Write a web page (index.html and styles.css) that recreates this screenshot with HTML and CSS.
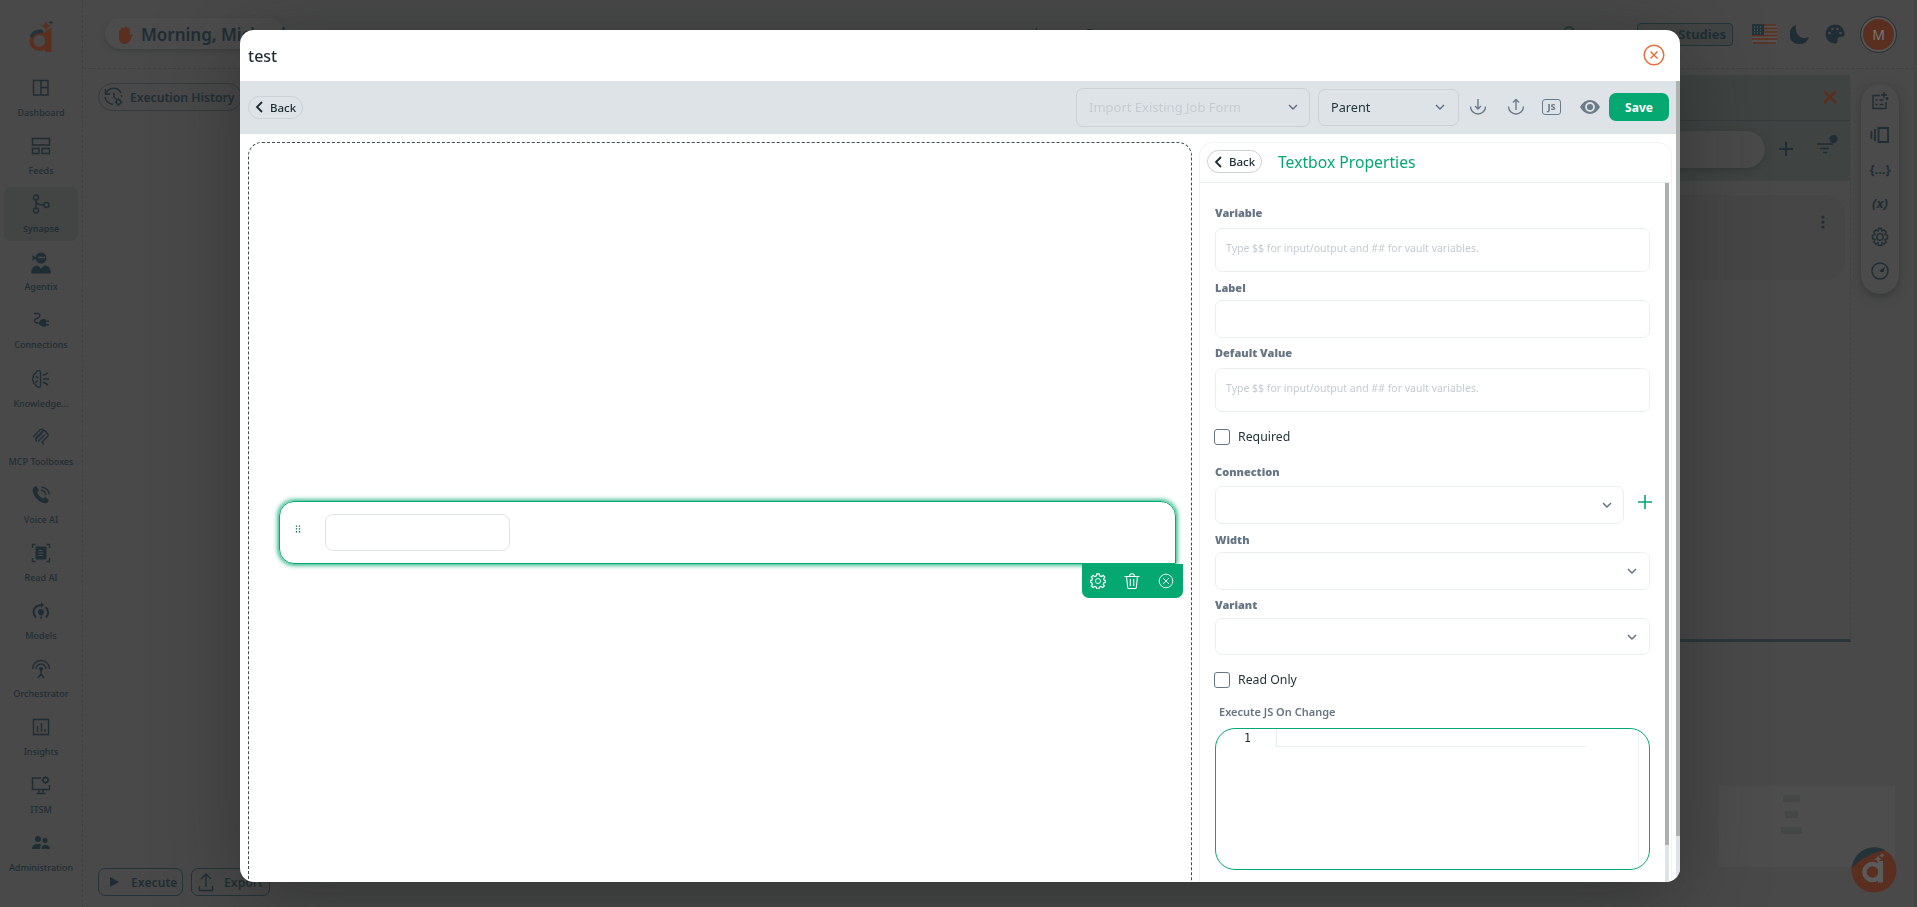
FILE: index.html
```html
<!DOCTYPE html>
<html lang="en">
<head>
    <meta charset="UTF-8">
    <meta name="viewport" content="width=device-width, initial-scale=1.0">
    <title>Form Builder</title>
    <link rel="stylesheet" href="styles.css">
</head>
<body>

    <div class="app">
        <nav class="sidebar">
            <svg class="logo" width="26" height="32" viewBox="0 0 26 32">
                <circle cx="11.500" cy="21" r="8" fill="none" stroke="#5a2f20" stroke-width="4"/>
                <path d="M17 11l6.500-3v24H17z" fill="#5a2f20"/>
                <path d="M3 17Q6 10 15 11.500" stroke="#22343a" stroke-width="3.500" fill="none"/>
                <path d="M18 1l1.500 3.500L23 6l-3.500 1.500L18 11l-1.500-3.500L13 6l3.500-1.500z" fill="#5a2f20"/>
                <path d="M23 0l.7 1.700 1.800.8-1.800.7L23 5l-.7-1.800-1.800-.7 1.800-.8z" fill="#22343a"/>
            </svg>

            <a class="nav-item">
                <svg width="20" height="20" viewBox="0 0 20 20"><path d="M2.500 2.500h14.500v14.500h-14.500zM10 2.500v14.500M10 9.500h7"/></svg>
                <span>Dashboard</span>
            </a>
            <a class="nav-item">
                <svg width="20" height="20" viewBox="0 0 20 20"><path d="M1.500 2.500h17v6.500h-17zM1.500 12.500h6.500v5h-6.500zM11 12.500h7.500v5h-7.500z"/></svg>
                <span>Feeds</span>
            </a>
            <a class="nav-item active">
                <svg width="20" height="20" viewBox="0 0 20 20"><circle cx="5" cy="3.500" r="2.500"/><circle cx="5" cy="16.500" r="2.500"/><circle cx="15.500" cy="11" r="2.500"/><path d="M5 6v8M5 7.500q1 3.500 8 3.500"/></svg>
                <span>Synapse</span>
            </a>
            <a class="nav-item">
                <svg class="solid" width="20" height="22" viewBox="0 0 20 22"><circle cx="10" cy="6" r="5.500"/><path d="M1.500 3l4 3-4 3zM0 21.500q.5-8 6.500-8l3.500 3 3.500-3q6 0 6.500 8z"/><path d="M7 5.500h7" stroke="#494949"/></svg>
                <span>Agentix</span>
            </a>
            <a class="nav-item">
                <svg width="20" height="20" viewBox="0 0 20 20"><path d="M3 3.500h4.500q3 2-.5 4.500-5 1.500-3 4 1 1 3.500 1"/><path class="fill" d="M8 12q2-4 7-2.500v1h3v1.500h-3v2h3v1.500h-3v1q-5 1-7-2.500z"/></svg>
                <span>Connections</span>
            </a>
            <a class="nav-item">
                <svg width="20" height="20" viewBox="0 0 20 20"><path d="M9.500 2.500v15M9.500 2q-4-1.500-5 2.500-3 1-2 3.500-2 2 0 4-.5 3 2 3.500 1.500 3.500 5 2.500M4.500 7.500q2 0 2.500 2M5 14q0-2 2-2M12 6q3 0 5-2.500M12 10h6M12 13.500q3 0 5 3"/></svg>
                <span>Knowledge...</span>
            </a>
            <a class="nav-item">
                <svg width="20" height="20" viewBox="0 0 20 20"><path d="M2 10l7-7q2-1.500 3.500.5 3 0 3 2.500 2.500 1 1 3.500l-5.500 5.500 2 2.500M4.500 12.500l7-7M7 14.500l7-7M12.500 3.500l-7.500 7.500q-1 2.500 1 3"/></svg>
                <span>MCP Toolboxes</span>
            </a>
            <a class="nav-item">
                <svg width="20" height="20" viewBox="0 0 20 20"><path class="fill" d="M2 3l3-2 3 4-2 2.500q2 4.500 6 6.500l2-2 4 3-2 3Q10 19 5 13 1 8 2 3z"/><path d="M10 5q4 1 5 5M10.500 2q6.500 1 8 7.500"/></svg>
                <span>Voice AI</span>
            </a>
            <a class="nav-item">
                <svg width="20" height="20" viewBox="0 0 20 20"><rect class="fill" x="4.500" y="3.500" width="11" height="13" rx="1"/><path d="M1.500 5v-3.500h3M15.500 1.500h3v3.500M1.500 15v3.500h3M15.500 18.500h3v-3.500"/><path class="cut" d="M7.500 7.500h4M7.500 10h5M7.500 12.500h4"/></svg>
                <span>Read AI</span>
            </a>
            <a class="nav-item">
                <svg width="20" height="20" viewBox="0 0 20 20"><path stroke-width="2" d="M5 16.500Q1 12 3.500 7.500 6 4 11 4M14.500 6q5 5 .5 10.500"/><path class="fill" d="M10 1l3 3-3 3z"/><path class="fill" d="M7 11a3 3 0 0 1 6 0q0 2-2 3.500h-2q-2-1.500-2-3.500zM9.300 15.500h1.500v2.500h-1.500z"/></svg>
                <span>Models</span>
            </a>
            <a class="nav-item">
                <svg width="20" height="20" viewBox="0 0 20 20"><path d="M1.500 10a8.500 8.500 0 0 1 17 0M5 10a5 5 0 0 1 10 0M10 11v4l-3 4M10 15l3 4"/><circle class="fill" cx="10" cy="10" r="2"/></svg>
                <span>Orchestrator</span>
            </a>
            <a class="nav-item">
                <svg width="20" height="20" viewBox="0 0 20 20"><path d="M2.500 2.500h15v15h-15zM6.500 9v6M10.500 6v9M14 12v3"/></svg>
                <span>Insights</span>
            </a>
            <a class="nav-item">
                <svg width="20" height="20" viewBox="0 0 20 20"><path d="M10 3H1.500v11.500h17V10M8 14.500v3M12 14.500v3M5.500 18.500h9"/><circle cx="14.500" cy="5" r="2.500"/><path d="M14.500 1v1.500M14.500 7.500V9M10.500 5H12M17 5h1.500M12 2.500l1 1M17 2.500l-1 1M12 7.500l1-1M17 7.500l-1-1"/></svg>
                <span>ITSM</span>
            </a>
            <a class="nav-item">
                <svg class="solid" width="20" height="20" viewBox="0 0 20 20"><circle cx="7" cy="6" r="3"/><circle cx="14" cy="7.500" r="2.500"/><path d="M1 16q0-5 6-5 2 0 3 .5-1 1.500-1 4.500zM10.500 16q0-4 4-4t4.500 4z"/></svg>
                <span>Administration</span>
            </a>
        </nav>

        <div class="main">
            <header class="topbar">
                <div class="greeting">
                    <svg class="hand" width="15" height="18" viewBox="0 0 15 18"><path d="M3 3q1-2 2.500-1 2-2 4-.2Q12 1.500 12 4v5l3-1-3 7q-2 3-5.500 3Q1 17.500 1 12V6q.5-2 2-3z"/></svg>
                    <span>Morning, Michael</span>
                </div>
                <svg class="top-marks" width="60" height="8" viewBox="0 0 60 8"><path d="M0 8l4-6v6zM54 4h5v4h-5z"/></svg>
                <div class="topbar-right">
                    <svg class="search-icon" width="20" height="20" viewBox="0 0 20 20"><circle cx="8" cy="8" r="5"/><path d="M12 12l5 5"/></svg>
                    <span class="studies">Case Studies</span>
                    <svg class="flag" width="25" height="20" viewBox="0 0 25 20">
                        <rect width="25" height="20" rx="2" fill="#56504e"/>
                        <path d="M1 1h23M0 4.500h25M0 8h25M0 11.500h25M0 15h25M1 19h23" stroke="#5a2f20" stroke-width="1.600"/>
                        <rect width="12" height="11" fill="#22343a"/>
                        <path d="M2 3h9M2 6h9M2 9h9" stroke="#4b5557" stroke-dasharray="1 2"/>
                    </svg>
                    <svg class="solid" width="20" height="20" viewBox="0 0 20 20"><path d="M6 1A10 10 0 1 0 19 13Q12 16 8 11 5 7 6 1z"/></svg>
                    <svg class="solid" width="20" height="20" viewBox="0 0 20 20"><path d="M10 .5a9.500 9.500 0 0 0 0 19q3 0 2.500-3-.5-3 2-3.500l3-.3Q20 12 19.500 9 18 .5 10 .5z"/><g fill="#494949"><circle cx="4.500" cy="9" r="1.300"/><circle cx="7.500" cy="5" r="1.300"/><circle cx="12.500" cy="5" r="1.300"/><circle cx="15.500" cy="9" r="1.300"/></g></svg>
                    <span class="avatar">M</span>
                </div>
            </header>

            <div class="workspace">
                <div class="workspace-left">
                    <button class="dark-btn round">
                        <svg width="20" height="20" viewBox="0 0 20 20"><path d="M2 7a8 8 0 0 1 15-1M17.500 8v2M1 10q1 6 8 7.500M1.500 2v5h5M10 5.500v5l3 2"/><circle cx="14.500" cy="15" r="2.200"/><path d="M14.500 11v1.500M14.500 17.500v1.500M11 15h1.500M16.500 15h2"/></svg>
                        Execution History
                    </button>
                    <div class="bottom-actions">
                        <button class="dark-btn execute-btn"><svg class="solid" width="20" height="20" viewBox="0 0 20 20"><path d="M6 5l9 5-9 5z"/></svg>Execute</button>
                        <button class="dark-btn export-btn"><svg width="16" height="20" viewBox="0 0 16 20"><path d="M8 15V2M3 7l5-5 5 5M1.500 14v4.500h13V14"/></svg>Export</button>
                    </div>
                </div>

                <section class="side-panel">
                    <div class="side-title">
                        <svg width="16" height="16" viewBox="0 0 16 16"><path d="M2 2l12 12M14 2L2 14"/></svg>
                    </div>
                    <div class="side-search">
                        <div class="search-pill"></div>
                        <svg width="16" height="16" viewBox="0 0 16 16"><path stroke-width="2" d="M8 1v14M1 8h14"/></svg>
                        <svg width="22" height="20" viewBox="0 0 22 20"><path d="M1 10h16M4 14.500h9M7 18.500h4"/><circle class="fill" cx="17.500" cy="5" r="4"/></svg>
                    </div>
                    <div class="side-card">
                        <svg class="solid" width="6" height="14" viewBox="0 0 6 14"><circle cx="3" cy="2" r="1.600"/><circle cx="3" cy="7" r="1.600"/><circle cx="3" cy="12" r="1.600"/></svg>
                    </div>
                </section>

                <div class="tool-pill">
                    <svg width="20" height="20" viewBox="0 0 20 20"><path d="M10 4.500H3v13h13V11M5.500 9h2M5.500 13.500h2M9.500 9h4M9.500 13.500h4M14 1v6M11 4h6M17 6v3M15.500 7.500h3"/></svg>
                    <svg width="20" height="20" viewBox="0 0 20 20"><path stroke-width="1.800" d="M8.500 3h9.500v14H8.500zM5 4v12M1.500 6v8"/></svg>
                    <span>{...}</span>
                    <span><i>(x)</i></span>
                    <svg width="20" height="20" viewBox="0 0 20 20"><circle cx="10" cy="10" r="3.200"/><path d="M8.500 1.500h3l.5 2.500 2-1.200 2.200 2.200L15 7.500l2.500.7v3.500l-2.500.7 1.200 2.500-2.200 2.200-2-1.200-.5 2.600h-3L8 15.900l-2 1.200L3.800 15 5 12.400l-2.500-.7V8.200L5 7.500 3.800 5 6 2.800 8 4z"/></svg>
                    <svg width="20" height="20" viewBox="0 0 20 20"><circle cx="10" cy="10" r="8"/><path class="fill" d="M15 6l-5.500 3.500 1 1.500h3z"/></svg>
                </div>

                <div class="minimap"><i class="n1"></i><i class="n2"></i><i class="n3"></i></div>
            </div>
        </div>
    </div>

    <div class="fab">
        <svg width="46" height="46" viewBox="0 0 46 46">
            <circle cx="23" cy="23" r="22.500" fill="#5a2f20"/>
            <path d="M1 21A22.500 22.500 0 0 1 34 3Q12 8 1 21z" fill="#22343a"/>
            <circle cx="21.500" cy="25" r="8" fill="none" stroke="#5a5a5a" stroke-width="4.500"/>
            <path d="M29.500 14v21.500" stroke="#5a5a5a" stroke-width="5"/>
            <path d="M27 8l1.200 3L31 12l-2.800 1.200L27 16l-1.200-2.800L23 12l2.800-1z" fill="#5a5a5a"/>
            <path d="M31 6.500v4M29 8.500h4" stroke="#5a5a5a"/>
        </svg>
    </div>

    <div class="overlay">
        <div class="modal">
            <div class="modal-header">
                <span>test</span>
                <svg width="22" height="22" viewBox="0 0 22 22"><circle cx="11" cy="11" r="9.800"/><path d="M7.500 7.500l7 7M14.500 7.500l-7 7"/></svg>
            </div>

            <div class="modal-scroll">
                <div class="modal-content">
                    <div class="toolbar">
                        <button class="back-btn"><svg width="8" height="12" viewBox="0 0 8 12"><path d="M7 1L2 6l5 5"/></svg>Back</button>
                        <div class="select import">Import Existing Job Form<svg width="10" height="6" viewBox="0 0 10 6"><path d="M1 1l4 4 4-4"/></svg></div>
                        <div class="select parent">Parent<svg width="10" height="6" viewBox="0 0 10 6"><path d="M1 1l4 4 4-4"/></svg></div>
                        <div class="tools">
                            <svg width="18" height="18" viewBox="0 0 18 18"><path d="M1.500 8.500a7.500 7.500 0 0 0 15 0M9 1v10M6 8l3 3 3-3"/></svg>
                            <svg width="18" height="18" viewBox="0 0 18 18"><path d="M1.500 8.500a7.500 7.500 0 0 0 15 0M9 12V1.500M6 4.500l3-3 3 3"/></svg>
                            <span class="js-icon">JS</span>
                            <svg class="eye" width="20" height="16" viewBox="0 0 20 16"><path d="M0 8q4-7 10-7t10 7q-4 7-10 7T0 8z"/><circle class="ring" cx="10" cy="8" r="4"/></svg>
                        </div>
                        <button class="save-btn">Save</button>
                    </div>

                    <div class="builder">
                        <div class="canvas">
                            <div class="field-card">
                                <svg width="6" height="8" viewBox="0 0 6 8"><path d="M1.500 .5v7M4.500 .5v7" stroke="#046b48" stroke-width="1.300" stroke-dasharray="1.300 1.500"/></svg>
                                <input class="field-input" type="text">
                                <div class="field-actions">
                                    <svg width="16" height="16" viewBox="0 0 20 20"><circle cx="10" cy="10" r="3.200"/><path stroke-width="1.500" d="M8.500 1h3l.5 2.500 2.200 1L16.500 3l2 2.200-1.500 2.200.8 1.600 2 .5v2l-2.200.5-1 2.200 1.400 2-2.200 2-2-1.300-2.200.9-.6 2.200h-2.400L8 17.800l-2.100-.9-2 1.300-2.200-2 1.400-2-1-2.200L0 11.500v-2L2.300 9l.8-2-1.400-2L3.800 3 6 4.400 8 3.500z"/></svg>
                                    <svg width="16" height="16" viewBox="0 0 16 16"><path d="M.5 3.500h15M2.500 3.500l1.200 11q.1 1 1 1h6.600q.9 0 1-1l1.200-11M5.500 3.500Q5.500 .7 8 .7t2.500 2.800M6.300 6v7M9.700 6v7"/></svg>
                                    <svg class="thin" width="16" height="16" viewBox="0 0 16 16"><circle cx="8" cy="8" r="6.800"/><path d="M5 5l6 6M11 5l-6 6"/></svg>
                                </div>
                            </div>
                        </div>

                        <div class="props">
                            <div class="props-header">
                                <button class="back-btn"><svg width="8" height="12" viewBox="0 0 8 12"><path d="M7 1L2 6l5 5"/></svg>Back</button>
                                <span class="props-title">Textbox Properties</span>
                            </div>
                            <div class="props-scroll">
                                <form class="props-body">
                                    <label class="lbl variable">Variable</label>
                                    <div class="box tall">Type $$ for input/output and ## for vault variables.</div>
                                    <label class="lbl label">Label</label>
                                    <div class="box"></div>
                                    <label class="lbl default">Default Value</label>
                                    <div class="box tall">Type $$ for input/output and ## for vault variables.</div>
                                    <label class="check"><span class="tick"></span>Required</label>
                                    <label class="lbl connection">Connection</label>
                                    <div class="conn-row">
                                        <div class="box drop"><svg width="10" height="6" viewBox="0 0 10 6"><path d="M1 1l4 4 4-4"/></svg></div>
                                        <svg class="plus" width="16" height="16" viewBox="0 0 16 16"><path d="M8 1v14M1 8h14"/></svg>
                                    </div>
                                    <label class="lbl width">Width</label>
                                    <div class="box drop"><svg width="10" height="6" viewBox="0 0 10 6"><path d="M1 1l4 4 4-4"/></svg></div>
                                    <label class="lbl variant">Variant</label>
                                    <div class="box drop short"><svg width="10" height="6" viewBox="0 0 10 6"><path d="M1 1l4 4 4-4"/></svg></div>
                                    <label class="check"><span class="tick"></span>Read Only</label>
                                    <label class="lbl execute">Execute JS On Change</label>
                                    <div class="editor">
                                        <span class="line-no">1</span>
                                        <div class="line"></div>
                                        <div class="ruler"></div>
                                    </div>
                                    <label class="lbl type">Type</label>
                                </form>
                                <div class="scrollbar"><div class="thumb"></div></div>
                            </div>
                        </div>
                    </div>
                </div>
                <div class="scrollbar outer"><div class="thumb"></div></div>
            </div>
        </div>
    </div>

</body>
</html>
```

FILE: styles.css
```css
* {
    box-sizing: border-box;
}
body {
    margin: 0;
    height: 100vh;
    overflow: hidden;
    background: #494949;
    color: #1f2e34;
    font-family: "Noto Sans", sans-serif;
}
svg {
    display: block;
    flex: none;
    fill: none;
    stroke: currentColor;
    stroke-width: 1.4;
}
svg.solid, svg .fill {
    fill: currentColor;
    stroke: none;
}
svg path.cut {
    stroke: #494949;
    stroke-width: 1;
}
button {
    font-family: inherit;
    cursor: pointer;
}

/* page behind the modal */
.app {
    display: flex;
    height: 100vh;
}
.sidebar {
    width: 83px;
    padding: 20px 4px 0;
    display: flex;
    flex-direction: column;
    align-items: center;
    gap: 4.1px;
    border-right: 1px dashed #414141;
}
.logo {
    margin: 0 0 15px;
    stroke: none;
}
.nav-item {
    width: 74px;
    height: 54px;
    padding: 7px 0 5px;
    border-radius: 7px;
    display: flex;
    flex: none;
    flex-direction: column;
    align-items: center;
    justify-content: space-between;
    font-size: 9px;
    font-weight: 500;
    line-height: 14px;
    white-space: nowrap;
}
.nav-item.active {
    background: #424544;
    font-weight: 600;
}
.main {
    flex: 1;
    display: flex;
    flex-direction: column;
    border-right: 3px solid #464646;
}
.topbar {
    height: 69px;
    display: flex;
    justify-content: space-between;
    padding: 18px 17px 0 22px;
    border-bottom: 1px dashed #414141;
}
.greeting {
    width: 180px;
    height: 31px;
    padding: 2px 0 0 13px;
    display: flex;
    align-items: center;
    gap: 8px;
    border-radius: 16px;
    background: #4c4c4c;
    box-shadow: 0 2px 4px #3c3f3e;
    font-size: 17px;
    font-weight: 600;
    white-space: nowrap;
}
.hand {
    fill: #5a2f20;
    stroke: none;
}
.top-marks {
    margin: 7px 0 0 280px;
    fill: currentColor;
    stroke: none;
}
.topbar-right {
    display: flex;
    align-items: center;
    height: 32px;
}
.search-icon {
    margin-right: 56px;
}
.studies {
    width: 96px;
    height: 23px;
    margin-right: 19px;
    padding-right: 6px;
    border: 1px solid #22343a;
    border-radius: 4px;
    background: #424544;
    font-size: 13px;
    font-weight: 700;
    line-height: 20px;
    text-align: right;
    white-space: nowrap;
}
.flag {
    margin-right: 13px;
    stroke: none;
}
.topbar-right .solid {
    margin-right: 15px;
}
.avatar {
    width: 37px;
    height: 37px;
    border: 1px solid #22343a;
    border-radius: 50%;
    background: #5a2f20;
    box-shadow: inset 0 0 0 2px #555;
    color: #777;
    font-size: 14px;
    line-height: 35px;
    text-align: center;
}
.workspace {
    flex: 1;
    display: flex;
    padding-left: 15px;
    position: relative;
}
.workspace-left {
    flex: 1;
    display: flex;
    flex-direction: column;
    align-items: flex-start;
    justify-content: space-between;
    padding: 14px 0 11px;
}
.bottom-actions {
    display: flex;
    gap: 8px;
}
.dark-btn {
    height: 28px;
    padding: 0 7px 0 5px;
    display: flex;
    align-items: center;
    gap: 7px;
    border: 1px solid #22343a;
    border-radius: 7px;
    background: none;
    color: inherit;
    font-size: 12.2px;
    font-weight: 600;
    white-space: nowrap;
}
.dark-btn.round {
    border-color: #353b3c;
    border-radius: 14px;
    gap: 6px;
}
.execute-btn {
    width: 85px;
}
.export-btn {
    width: 79px;
    padding-left: 6px;
    gap: 10px;
}
.side-panel {
    width: 451px;
    height: 567px;
    margin-top: 6px;
    border-right: 1px dashed #434343;
    border-bottom: 3px solid #2c3638;
    border-radius: 6px 6px 0 0;
}
.side-title {
    height: 46px;
    padding: 14px 12px 0 0;
    display: flex;
    justify-content: flex-end;
    background: #3f4342;
    border-bottom: 1px solid #353b3c;
    color: #5a2f20;
}
.side-title svg {
    stroke-width: 2.5;
}
.side-search {
    height: 60px;
    padding: 10px 12px 0 0;
    display: flex;
    align-items: flex-start;
    background: #3f4342;
}
.search-pill {
    flex: 1;
    height: 37px;
    border-radius: 19px;
    background: #4a4a4a;
    box-shadow: 0 2px 5px #363a39;
}
.side-search svg {
    margin: 10px 0 0 13px;
}
.side-search svg:last-child {
    margin: 3px 0 0 22px;
}
.side-card {
    height: 85px;
    margin: 14px 5px 0 0;
    padding: 20px 19px 0 0;
    display: flex;
    justify-content: flex-end;
    border-radius: 20px;
    background: #464646;
}
.tool-pill {
    width: 38px;
    height: 210px;
    margin: 15px 15px 0 10px;
    padding: 7px 0 13px;
    display: flex;
    flex-direction: column;
    align-items: center;
    justify-content: space-between;
    border-radius: 19px;
    background: #4b4b4b;
    box-shadow: 0 3px 10px #363938;
    font-size: 13px;
    font-weight: 700;
    line-height: 20px;
}
.minimap {
    position: absolute;
    right: 19px;
    bottom: 40px;
    width: 176px;
    height: 81px;
    padding: 9px 32px 0 0;
    display: flex;
    flex-direction: column;
    align-items: center;
    gap: 9px;
    background: #4d4d4d;
}
.minimap i {
    height: 7px;
    border-radius: 1px;
    background: #444746;
}
.minimap .n1 { width: 17px; }
.minimap .n2 { width: 13px; }
.minimap .n3 { width: 21px; }
.fab {
    position: fixed;
    right: 20px;
    bottom: 14px;
}
.fab svg {
    stroke: none;
}

/* modal */
.overlay {
    position: fixed;
    inset: 0;
    padding-top: 30px;
    display: flex;
    justify-content: center;
    align-items: flex-start;
}
.modal {
    width: 1440px;
    height: 852px;
    margin-left: 3px;
    display: flex;
    flex-direction: column;
    overflow: hidden;
    border-radius: 14px;
    background: #fff;
    box-shadow: 0 14px 80px rgba(25, 32, 28, 0.5);
}
.modal-header {
    height: 51px;
    padding: 0 15px 0 8px;
    display: flex;
    flex: none;
    align-items: center;
    justify-content: space-between;
    font-size: 16px;
    font-weight: 500;
}
.modal-header svg {
    margin-top: -1px;
    color: #e6713f;
    stroke-width: 1.5;
}
.modal-scroll {
    flex: 1;
    display: flex;
    min-height: 0;
}
.modal-content {
    flex: 1;
    display: flex;
    flex-direction: column;
    min-width: 0;
}
.scrollbar {
    width: 4px;
    flex: none;
    background: #dee3e8;
}
.scrollbar .thumb {
    height: 662px;
    background: #acb0af;
}
.scrollbar.outer .thumb {
    height: 755px;
}
.toolbar {
    height: 53px;
    flex: none;
    padding: 0 7px 1px 8px;
    display: flex;
    align-items: center;
    background: #dee3e7;
}
.back-btn {
    width: 55px;
    height: 23px;
    padding: 0 0 0 6px;
    display: flex;
    align-items: center;
    gap: 7px;
    border: 1px solid #cbd1d6;
    border-radius: 12px;
    background: transparent;
    color: #1c2b33;
    font-size: 11.5px;
    font-weight: 500;
}
.back-btn svg {
    stroke-width: 1.8;
}
.select {
    display: flex;
    align-items: center;
    justify-content: space-between;
    border: 1px solid #cbd1d6;
    border-radius: 7px;
    color: #22343a;
    font-size: 13px;
}
.select svg, .drop svg {
    color: #5e6e7c;
    stroke-width: 1.4;
}
.import {
    width: 234px;
    height: 39px;
    margin-left: auto;
    padding: 0 11px 0 12px;
    color: #c6cdd2;
}
.parent {
    width: 141px;
    height: 37px;
    margin-left: 8px;
    padding: 0 13px 0 12px;
    font-size: 12.7px;
}
.tools {
    display: flex;
    align-items: center;
    margin: 0 9px 0 10px;
    color: #6b7b88;
    gap: 20px;
}
.js-icon {
    width: 19px;
    height: 16px;
    margin: 0 -1px 0 -3px;
    border: 1.5px solid #6b7b88;
    border-radius: 3px;
    font-size: 9px;
    font-weight: 800;
    line-height: 13px;
    text-align: center;
}
.eye {
    fill: currentColor;
    stroke: none;
}
.eye .ring {
    stroke: #dee3e7;
    stroke-width: 1.8;
}
.save-btn {
    width: 60px;
    height: 28px;
    padding: 0;
    border: none;
    border-radius: 7px;
    background: #05a870;
    color: #fff;
    font-size: 12px;
    font-weight: 700;
}
.builder {
    flex: 1;
    display: flex;
    min-height: 0;
    padding: 8px 7px 0 8px;
}
.canvas {
    width: 944px;
    height: 780px;
    flex: none;
    padding: 358px 15px 0 30px;
    border: 1px dashed #3d4c58;
    border-radius: 14px;
}
.field-card {
    position: relative;
    height: 63px;
    padding: 0 0 1px 15px;
    display: flex;
    align-items: center;
    gap: 24px;
    border: 1.5px solid #05a870;
    border-radius: 15px 15px 0 15px;
    box-shadow: 0 0 5px 1px #05a870;
}
.field-card > svg {
    margin-top: -6px;
}
.field-input {
    width: 185px;
    height: 37px;
    border: 1px solid #dee3e7;
    border-radius: 8px;
}
.field-actions {
    position: absolute;
    top: 62px;
    right: -8px;
    width: 101px;
    height: 34px;
    padding: 0 9px 0 8px;
    display: flex;
    align-items: center;
    justify-content: space-between;
    border-radius: 0 0 7px 7px;
    background: #05a870;
    color: #fff;
}
.field-actions svg {
    stroke-width: 1.1;
}
.field-actions svg.thin {
    stroke-width: 0.9;
}

/* properties panel */
.props {
    flex: 1;
    margin-left: 7px;
    display: flex;
    flex-direction: column;
    min-height: 0;
    border: 1px solid #f1f4f4;
    border-bottom: none;
    border-radius: 14px 14px 0 0;
}
.props-header {
    height: 40px;
    flex: none;
    padding: 0 0 2px 7px;
    display: flex;
    align-items: center;
    gap: 16px;
    border-bottom: 1px solid #e6eeee;
}
.props-title {
    color: #05a870;
    font-size: 15.7px;
}
.props-scroll {
    flex: 1;
    display: flex;
    min-height: 0;
    margin-right: 2px;
    overflow: hidden;
}
.props-body {
    flex: 1;
    padding: 21px 15px 0;
}
.lbl {
    display: block;
    color: #657583;
    font-size: 11px;
    font-weight: 900;
    line-height: 18px;
}
.variable { margin-bottom: 6px; }
.label { margin: 7px 0 3px; }
.default { margin: 6px 0; }
.connection { margin: 17px 0 5px; }
.width { margin: 7px 0 3px; }
.variant { margin: 6px 0 4px; }
.execute {
    margin: 14px 0 7px 4px;
    font-weight: 600;
}
.type { margin-top: 7px; }
.box {
    height: 38px;
    padding: 0 10px;
    border: 1px solid #e8efef;
    border-radius: 7px;
    color: #c3cbd2;
    font-size: 10.5px;
}
.box.tall {
    height: 44px;
    line-height: 39px;
}
.box.short {
    height: 37px;
}
.drop {
    display: flex;
    align-items: center;
    justify-content: flex-end;
    padding-right: 12px;
}
.check {
    height: 18px;
    margin: 16px 0 0 -1px;
    padding-bottom: 1px;
    display: flex;
    align-items: center;
    gap: 8px;
    color: #22343a;
    font-size: 12.3px;
}
.tick {
    width: 16px;
    height: 16px;
    border: 1.5px solid #657583;
    border-radius: 3px;
}
.conn-row {
    display: flex;
    gap: 13px;
}
.conn-row .box {
    width: 409px;
    padding-right: 11px;
}
.plus {
    margin: 8px -3px 0 0;
    color: #05a870;
    stroke-width: 1.6;
}
.editor {
    height: 142px;
    display: flex;
    border: 1px solid #05a870;
    border-radius: 20px;
}
.line-no {
    width: 60px;
    padding-left: 28px;
    color: #1c2b33;
    font-family: "DejaVu Sans Mono", monospace;
    font-size: 11.5px;
    line-height: 18px;
}
.line {
    width: 310px;
    height: 18px;
    border-left: 1px solid #e8efef;
    border-bottom: 1px solid #e8efef;
}
.ruler {
    margin: 3px 10px 3px auto;
    border-right: 1px solid #eef2f2;
}
```
